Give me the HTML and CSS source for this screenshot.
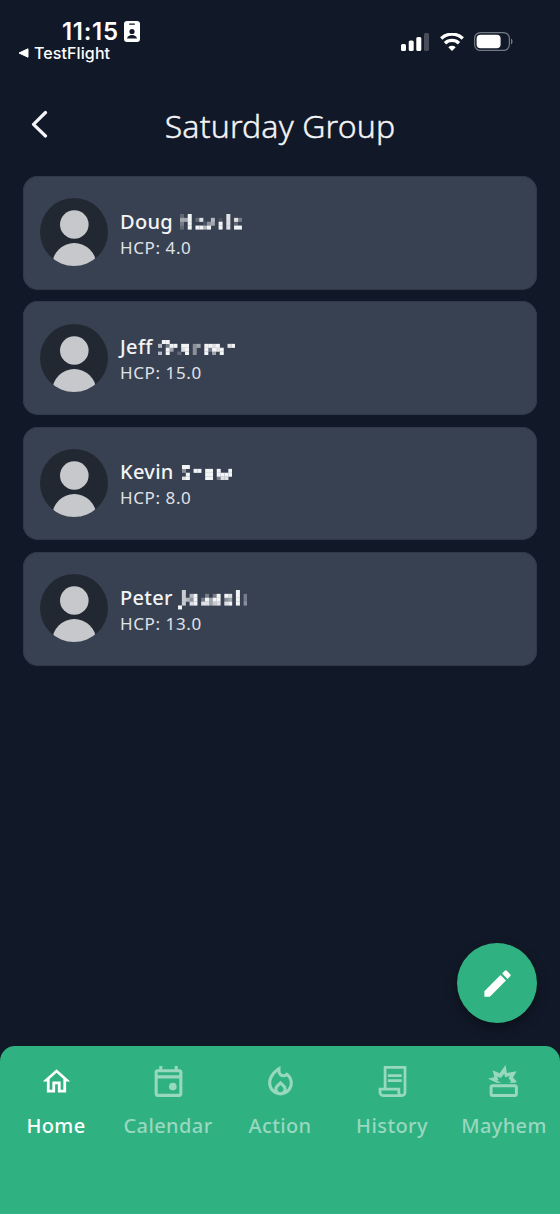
FILE: index.html
```html
<!DOCTYPE html>
<html lang="en">
<head>
<meta charset="utf-8">
<title>Saturday Group</title>
<link rel="stylesheet" href="styles.css">
</head>
<body>
<div class="app">
  <header class="status">
    <div class="status-left">
      <div class="clock"><span class="time">11:15</span>
        <svg class="badge" viewBox="0 0 16 21"><rect width="16" height="21" rx="3" fill="#fff"/><rect x="5" y="2.4" width="6" height="1.3" rx=".6" fill="#111827"/><circle cx="8" cy="10.5" r="2.6" fill="#111827"/><path d="M3 17.6c.3-2.400 2.500-3.700 5-3.700s4.700 1.300 5 3.700z" fill="#111827"/></svg>
      </div>
      <div class="back-app"><svg class="back-tri" viewBox="0 0 11 10"><path d="M1 5 10 .8v8.400z" fill="#fff" stroke="#fff" stroke-linejoin="round"/></svg><span>TestFlight</span></div>
    </div>
    <div class="status-right">
      <svg width="28" height="18" viewBox="0 0 28 18" fill="#fff"><rect x="0" y="11" width="5" height="7" rx="1.500"/><rect x="7.700" y="7.500" width="5" height="10.500" rx="1.500"/><rect x="15.300" y="4" width="5" height="14" rx="1.500"/><rect x="23" y="0" width="5" height="18" rx="1.500" opacity=".23"/></svg>
      <svg class="wifi" width="24" height="18" viewBox="0 0 24 18" fill="none" stroke="#fff" stroke-width="3.300"><path d="M1.200 5.500a15.600 15.600 0 0 1 21.600 0"/><path d="M5 10.200a10 10 0 0 1 14 0"/><path d="M12 18 8.300 14.300a5.400 5.400 0 0 1 7.400 0z" fill="#fff" stroke="none"/></svg>
      <svg class="battery" width="39" height="19" viewBox="0 0 39 19"><rect x=".6" y=".6" width="34.800" height="17.800" rx="5.800" fill="none" stroke="#737984" stroke-width="1.200"/><rect x="2.600" y="2.700" width="24" height="13.600" rx="4" fill="#fff"/><path d="M37 6.500c2 1 2 5 0 6z" fill="#737984"/></svg>
    </div>
  </header>

  <div class="titlebar">
    <svg class="chevron" width="18" height="28" viewBox="0 0 18 28" fill="none" stroke="#f3f4f6" stroke-width="3.200" stroke-linecap="round" stroke-linejoin="round"><path d="M14.500 2.500 2.500 14.300 14.500 26"/></svg>
    <h1>Saturday Group</h1>
  </div>

  <main class="list">
    <section class="card">
      <svg class="avatar" viewBox="0 0 68 68"><use href="#person"/></svg>
      <div class="info"><div class="name"><span>Doug</span><svg class="mosaic m1" data-rows="2090000000008000|5590280060108083|3090001450908020|2090996900908099"></svg></div><div class="hcp">HCP: 4.0</div></div>
    </section>
    <section class="card">
      <svg class="avatar" viewBox="0 0 68 68"><use href="#person"/></svg>
      <div class="info"><div class="name"><span>Jeff</span><svg class="mosaic m2" data-rows="09900000000000000000|60399099045099890089|00950089040093989000|60900209040090509000"></svg></div><div class="hcp">HCP: 15.0</div></div>
    </section>
    <section class="card">
      <svg class="avatar" viewBox="0 0 68 68"><use href="#person"/></svg>
      <div class="info"><div class="name"><span>Kevin</span><svg class="mosaic m3" data-rows="9900000000000|4009909909009|0900009909999|8900009903880"></svg></div><div class="hcp">HCP: 8.0</div></div>
    </section>
    <section class="card">
      <svg class="avatar" viewBox="0 0 68 68"><use href="#person"/></svg>
      <div class="info"><div class="name"><span>Peter</span><svg class="mosaic m4" data-rows="070000000000000900|070690030390980903|076490395990450903|070890885780890904|900000000000000000"></svg></div><div class="hcp">HCP: 13.0</div></div>
    </section>
  </main>

  <button class="fab" aria-label="Edit"><svg width="35" height="35" viewBox="0 0 24 24" fill="#fff"><path d="M3 17.250V21h3.750L17.810 9.940l-3.750-3.750L3 17.250zM20.710 7.040a1 1 0 0 0 0-1.410l-2.340-2.340a1 1 0 0 0-1.410 0l-1.830 1.830 3.750 3.750 1.830-1.830z"/></svg></button>

  <nav class="tabs">
    <a class="tab active"><svg class="home" viewBox="0 0 24 24" fill="currentColor"><path d="M12 5.690l5 4.500V18h-2v-6H9v6H7v-7.810l5-4.500M12 3L2 12h3v8h6v-6h2v6h6v-8h3L12 3z"/></svg><span>Home</span></a>
    <a class="tab"><svg viewBox="0 0 24 24" fill="currentColor"><path fill-rule="evenodd" d="M6 2h2v2h8V2h2v2h1a2 2 0 0 1 2 2v14a2 2 0 0 1-2 2H5a2 2 0 0 1-2-2V6a2 2 0 0 1 2-2h1zM5 6v2h14V6zM5 10v10h14V10z"/><circle cx="14.800" cy="15.300" r="2.500"/></svg><span>Calendar</span></a>
    <a class="tab"><svg viewBox="0 0 24 24" fill="currentColor"><path fill-rule="evenodd" d="M16 6l-.44.55C14.380 8.020 12 7.190 12 5.300V2S4 6 4 13c0 4.420 3.580 8 8 8s8-3.580 8-8c0-2.960-1.610-5.620-4-7zm-4 13c-1.100 0-2-.87-2-1.940 0-.51.2-.99.58-1.360L12 14.300l1.430 1.400c.37.37.57.85.57 1.360C14 18.130 13.100 19 12 19zm3.960-1.500c.04-.36.22-1.890-1.130-3.220L12 11.500l-2.830 2.780C7.810 15.620 8 17.160 8.040 17.500 6.790 16.400 6 14.790 6 13c0-3.160 2.130-5.650 4.030-7.250A3.974 3.974 0 0 0 13.920 9.280c.78 0 1.550-.23 2.200-.68C17.340 9.710 18 11.300 18 13c0 1.790-.79 3.400-2.040 4.500z"/></svg><span>Action</span></a>
    <a class="tab"><svg viewBox="0 0 24 24" fill="none" stroke="currentColor" stroke-width="1.800"><path d="M7.200 17V2.900H20.100v16.200a2 2 0 0 1-2 2H5.900a2 2 0 0 1-2-2v-2.200h12.200v2.200a2 2 0 0 0 2 2M9 8.200h9M9 11.400h9"/></svg><span>History</span></a>
    <a class="tab"><svg class="burst" viewBox="0 0 24 24" fill="none" stroke="currentColor" stroke-width="1.900"><rect x="3.950" y="14.700" width="16.400" height="6.400" rx="1"/><path stroke="none" fill="currentColor" d="M7.500 12.800 2 10.200 6.100 9 4.900 4.700 9.500 6.700 13.300 1.300 14.200 6.500 20.500 5.400 18.200 9.400 20.700 12.300 19 12.800H15.500L17 12 15.200 9.700 16.300 8.200 13.100 9.300 12.500 6.900 10.200 9.800 7.900 8.700 8.700 10.800 7.500 11.200 10.500 12.800z"/></svg><span>Mayhem</span></a>
  </nav>
</div>
<svg width="0" height="0" class="defs"><defs><clipPath id="disc"><circle cx="34" cy="34" r="34"/></clipPath><g id="person" clip-path="url(#disc)"><rect width="68" height="68" fill="#222831"/><circle cx="34.300" cy="26.500" r="14.300" fill="#c6c8cc"/><circle cx="34.300" cy="67" r="22" fill="#c6c8cc"/></g></defs></svg>
<script src="mosaic.js"></script>
</body>
</html>
```
FILE: styles.css
```css
* { box-sizing: border-box; }
body { margin: 0; background: #111827; font-family: "Noto Sans", "Open Sans", sans-serif; color: #f3f4f6; }
.app { position: relative; width: 560px; height: 1214px; display: flex; flex-direction: column; overflow: hidden; }
svg { display: block; flex: none; }
.defs { position: absolute; }
.status { height: 88px; flex: none; display: flex; justify-content: space-between; color: #fff; font-family: Inter, sans-serif; }
.status-left { padding: 18px 0 0 18px; }
.clock { display: flex; align-items: center; padding-left: 44px; height: 26px; gap: 6px; }
.time { font-size: 24px; font-weight: 600; line-height: 27px; width: 56px; letter-spacing: 0.7px; white-space: nowrap; }
.badge { width: 16px; height: 21px; }
.back-app { display: flex; align-items: center; gap: 5px; height: 18px; font-size: 16px; font-weight: 500; letter-spacing: 0.1px; }
.back-tri { width: 11px; height: 10px; }
.status-right { display: flex; align-items: flex-start; padding: 33px 47px 0 0; }
.wifi { margin-left: 11px; }
.battery { margin-left: 10px; margin-top: -1px; }
.titlebar { height: 87.8px; flex: none; display: grid; grid-template-columns: 60px 1fr 60px; }
.chevron { margin: 22px 0 0 31px; }
h1 { margin: 16px 0 0; font-size: 32px; line-height: 44px; font-weight: 300; text-align: center; white-space: nowrap; letter-spacing: 0.15px; -webkit-text-stroke: 0.4px; }
.list { display: flex; flex-direction: column; gap: 11.6px; padding: 0 23px; }
.card { height: 113.8px; padding: 0 17px; display: flex; align-items: center; gap: 12px; background: #384151; border-radius: 15px; box-shadow: inset 0 0 0 1px #303948; }
.avatar { width: 68px; height: 68px; margin-top: -1px; }
.info { height: 60px; padding-top: 5px; }
.name { display: flex; height: 27px; font-size: 20px; line-height: 27px; font-weight: 500; letter-spacing: 0.3px; }
.name span { flex: none; }
.mosaic { margin-top: 6.500px; }
.m1 { margin-left: 7px; }
.m2 { margin-left: 5px; }
.m3 { margin-left: 8px; }
.m4 { margin-left: 5px; }
.hcp { font-size: 17px; line-height: 26px; letter-spacing: 0.6px; color: #e0e2e6; }
.fab { position: absolute; left: 457px; top: 943px; width: 80px; height: 80px; padding: 0; border: 0; border-radius: 50%; background: #30b181; display: flex; align-items: center; justify-content: center; box-shadow: 0 5px 12px rgba(0,0,0,.35); }
.tabs { margin-top: auto; height: 168px; flex: none; display: grid; grid-template-columns: repeat(5, 112px); background: #30b181; border-radius: 15px 15px 0 0; }
.tab { display: flex; flex-direction: column; align-items: center; padding-top: 17px; color: #98d8c0; font-size: 20px; line-height: 28px; font-weight: 500; letter-spacing: 0.4px; }
.tab svg { width: 37px; height: 37px; }
.tab svg.home { width: 33px; height: 33px; margin: 2px; }
.tab svg.burst { margin-right: 2px; }
.tab span { margin-top: 12px; }
.tab.active { color: #fff; }
```
FILE: mosaic.js
```js
// Draws each redacted surname as a grid of blocks; digits give opacity from 0 to 9.
const CELL = 3.86;
document.querySelectorAll('.mosaic').forEach((svg) => {
  const rows = svg.dataset.rows.split('|');
  svg.setAttribute('width', rows[0].length * CELL);
  svg.setAttribute('height', rows.length * CELL);
  rows.forEach((row, y) => [...row].forEach((level, x) => {
    if (level === '0') return;
    const r = document.createElementNS('http://www.w3.org/2000/svg', 'rect');
    r.setAttribute('x', x * CELL);
    r.setAttribute('y', y * CELL);
    r.setAttribute('width', CELL + 0.15);
    r.setAttribute('height', CELL + 0.15);
    r.setAttribute('fill', '#f3f4f6');
    r.setAttribute('fill-opacity', level / 9);
    svg.append(r);
  }));
});
```
